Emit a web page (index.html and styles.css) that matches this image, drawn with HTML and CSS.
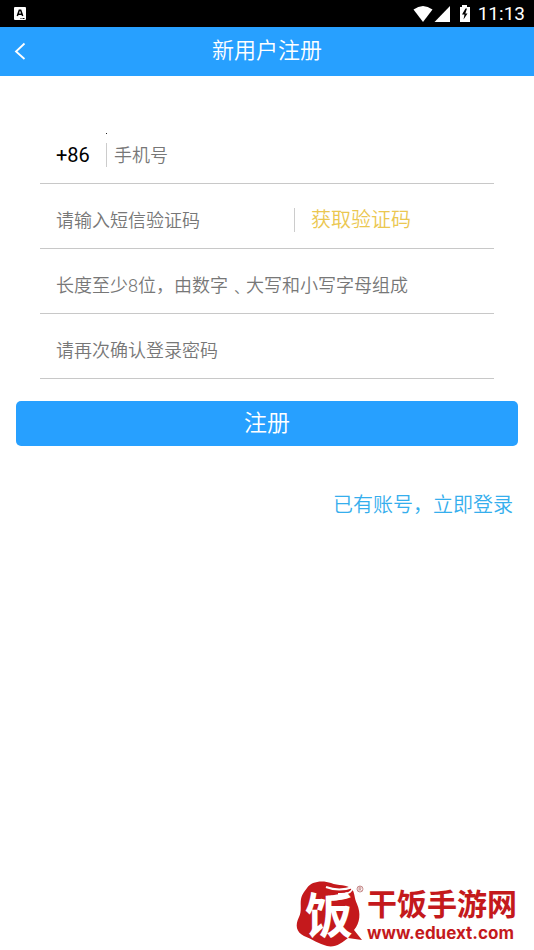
FILE: index.html
```html
<!DOCTYPE html>
<html lang="zh-CN">
<head>
<meta charset="utf-8">
<meta name="viewport" content="width=device-width, initial-scale=1">
<title>新用户注册</title>
<link rel="stylesheet" href="styles.css">
</head>
<body>
<div class="status-bar">
  <svg class="status-app" viewBox="0 0 12 13" aria-hidden="true">
    <rect width="12" height="13" rx="1" fill="#fff"/>
    <path d="M3.300 9 5.300 3.200h1.400L8.700 9M4.200 7.200h3.600" fill="none" stroke="#000" stroke-width="1.500"/>
    <path d="M6.500 11.500h1M8.500 11.500h2" stroke="#000"/>
  </svg>
  <svg class="status-signals" viewBox="0 0 58 18" aria-hidden="true">
    <path d="M0.500 4.500Q10 -2.500 19.500 4.500L10 17Z" fill="#fff"/>
    <path d="M37 1V17H21.500Z" fill="#fff"/>
    <path d="M47 2h2V0h5v2h3v15H47Z" fill="#fff"/>
    <path d="M52.500 3.500 49 9.500h2.500L50.500 14.500 54.500 8.500H52.300L54 3.500Z" fill="#000"/>
  </svg>
  <time class="clock">11:13</time>
</div>
<header class="nav">
  <button class="back" type="button" aria-label="返回">
    <svg viewBox="0 0 12 18" aria-hidden="true"><path d="M10.500 1.500 2 9.500l8.500 7.500" fill="none" stroke="#fff" stroke-width="1.800"/></svg>
  </button>
  <h1 class="title">新用户注册</h1>
</header>
<main class="page">
  <form class="form">
    <div class="row first">
      <span class="code">+86</span>
      <input class="field phone" type="tel" placeholder="手机号" aria-label="手机号">
    </div>
    <div class="row">
      <input class="field" type="text" placeholder="请输入短信验证码" aria-label="短信验证码">
      <button class="send" type="button">获取验证码</button>
    </div>
    <div class="row">
      <input class="field" type="password" placeholder="长度至少8位，由数字﹑大写和小写字母组成" aria-label="密码">
    </div>
    <div class="row">
      <input class="field" type="password" placeholder="请再次确认登录密码" aria-label="确认密码">
    </div>
    <button class="submit" type="submit">注册</button>
  </form>
  <a class="login" href="#login">已有账号，立即登录</a>
</main>
<footer class="brand">
  <svg class="brand-mark" viewBox="0 0 70 68" role="img" aria-label="饭">
    <path d="M12 8C16 1 28 0 36 3C43 6 52 4 57 9C60 13 59 18 62 24C66 33 65 43 59 50L67 60L53 58C47 63 40 68 32 66C24 64 17 59 9 56C1 52 0 45 4 37C7 31 5 25 6 19C7 14 9 12 12 8Z" fill="#c4191c"/>
    <text class="brand-glyph" x="10" y="53">饭</text>
    <path d="M31 7Q44 12 58 7Q57 15 43 14" fill="none" stroke="#fff" stroke-width="2"/>
    <circle cx="65" cy="9" r="3" fill="none" stroke="#b97070" stroke-width="0.800"/>
    <path d="M64 11V7h1.500q1.500 1 0 2H64M65 9l1.500 2" fill="none" stroke="#b97070" stroke-width="0.700"/>
  </svg>
  <div class="brand-words">
    <span class="brand-name">干饭手游网</span>
    <span class="brand-url">www.eduext.com</span>
  </div>
</footer>
</body>
</html>
```
FILE: styles.css
```css
* { box-sizing: border-box; }
body {
  margin: 0;
  min-height: 100vh;
  display: flex;
  flex-direction: column;
  background: #fff;
  font-family: Roboto, "Noto Sans CJK SC", sans-serif;
  font-weight: 350;
}
button, input { font: inherit; border: 0; padding: 0; background: none; }
.status-bar {
  display: flex;
  align-items: center;
  height: 27px;
  padding: 0 9px 0 14px;
  background: #000;
  color: #fff;
}
.status-app { width: 12px; height: 13px; }
.status-signals { width: 58px; height: 18px; margin: 0 7px 0 auto; }
.clock { font-size: 19px; font-weight: 450; line-height: 27px; }
.nav {
  display: grid;
  grid-template-columns: 40px 1fr 40px;
  align-items: center;
  height: 49px;
  padding-bottom: 2px;
  background: #27a0ff;
  color: #fff;
}
.back { display: flex; justify-content: center; }
.back svg { width: 12px; height: 18px; }
.title { margin: 0; text-align: center; font-size: 22px; font-weight: 350; line-height: 46px; }
.page { display: flex; flex-direction: column; flex: 1; padding: 43px 16px 0; }
.form { display: flex; flex-direction: column; }
.row {
  display: flex;
  align-items: center;
  height: 65px;
  margin: 0 24px;
  padding: 8px 0 0 16px;
  border-bottom: 1px solid #c8c8c8;
}
.first { position: relative; }
.first::before {
  content: "";
  position: absolute;
  top: 14px;
  left: 66px;
  width: 1px;
  height: 1px;
  background: #222;
}
.code { width: 50px; font-size: 20px; font-weight: 400; color: #000; }
.field { flex: 1; min-width: 0; height: 24px; font-size: 18px; color: #333; outline: 0; }
.field::placeholder { color: #777; opacity: 1; }
.phone { padding-left: 7px; border-left: 1px solid #ccc; }
.send {
  width: 200px;
  height: 24px;
  padding-left: 16px;
  border-left: 1px solid #ccc;
  text-align: left;
  font-size: 20px;
  line-height: 24px;
  color: #ebc750;
}
.submit {
  height: 45px;
  margin-top: 22px;
  padding-bottom: 6px;
  border-radius: 5px;
  background: #27a0ff;
  color: #fff;
  font-size: 23px;
}
.login { align-self: flex-end; margin: 43px 5px 0 0; font-size: 20px; line-height: 32px; color: #35aeed; text-decoration: none; }
.brand { display: flex; justify-content: flex-end; padding: 0 17px 2px 0; color: #c4191c; }
.brand-mark { width: 70px; height: 68px; margin-right: 2px; }
.brand-glyph { font-family: "Noto Sans CJK SC", sans-serif; font-size: 48px; font-weight: 700; fill: #fff; }
.brand-words { display: flex; flex-direction: column; gap: 4px; padding-top: 10px; }
.brand-name { font-size: 30px; font-weight: 700; line-height: 30px; }
.brand-url { font-family: Inter, sans-serif; font-size: 17px; font-weight: 700; line-height: 18px; }
```
